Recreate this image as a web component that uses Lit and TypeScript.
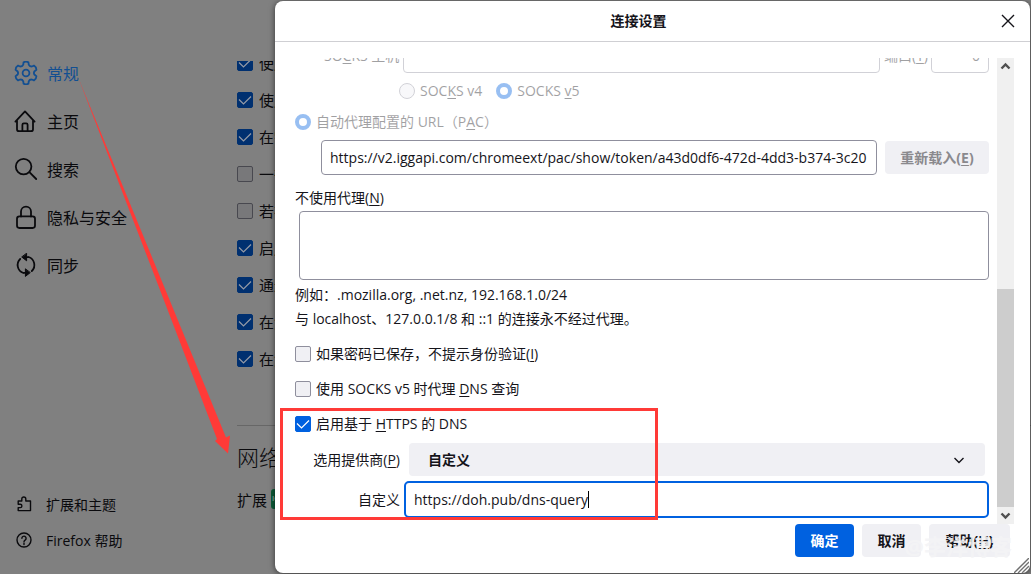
import { LitElement, html, css, svg } from "lit";
import { customElement } from "lit/decorators.js";

const gearTeeth = () => {
  const pts: string[] = [];
  for (let i = 0; i < 6; i++) {
    const at = (deg: number, r: number) => {
      const a = ((i * 60 + deg - 90) * Math.PI) / 180;
      return `${(12 + r * Math.cos(a)).toFixed(2)} ${(12 + r * Math.sin(a)).toFixed(2)}`;
    };
    pts.push(`${i ? "L" : "M"}${at(-13, 10.9)}Q${at(0, 12)} ${at(13, 10.9)}L${at(18, 8.8)}Q${at(30, 7.2)} ${at(42, 8.8)}`);
  }
  return pts.join("") + "Z";
};

const icons = {
  gear: svg`<path d=${gearTeeth()} /><circle cx="12" cy="12" r="3.4" />`,
  home: svg`<path d="M1.4 12.6 11 2.400l9.600 10.200M3 11v9.200a2 2 0 0 0 2 2h12a2 2 0 0 0 2-2V11M8.400 22v-6.200a1.400 1.400 0 0 1 1.400-1.400h2.400a1.400 1.400 0 0 1 1.400 1.400V22" />`,
  search: svg`<circle cx="9.600" cy="9.600" r="7.800" /><path d="m15.400 15.200 6.800 6.800" />`,
  lock: svg`<rect x="3" y="11.400" width="18" height="11.600" rx="2.400" /><path d="M7 11.400V6.600a5 5 0 0 1 10 0v4.800" />`,
  sync: svg`<path d="M9.4 20A8.4 8.4 0 0 1 6.2 6M14.6 4A8.4 8.4 0 0 1 17.8 18M11 4.2h3.6M13 19.8H9.4" /><path d="M12.6.6v7.2L8 4.2zM11.4 16.200v7.200L16 19.800z" fill="currentColor" stroke-width="1" />`,
  puzzle: svg`<path d="M2.200 5h3.600V3a2 2 0 0 1 4 0v2h4.700v9.600H2.200v-3h2a1.600 1.600 0 0 0 0-3.400h-2z" />`,
  help: svg`<circle cx="8" cy="8" r="7" /><path d="M5.900 6.300a2.100 2.100 0 1 1 3.400 1.600C8.400 8.500 8 8.800 8 9.700M8 11.300v1.200" />`,
};

const categories = [
  { icon: icons.gear, label: "常规", current: true },
  { icon: icons.home, label: "主页" },
  { icon: icons.search, label: "搜索" },
  { icon: icons.lock, label: "隐私与安全" },
  { icon: icons.sync, label: "同步" },
];

const options = [
  { label: "使用", on: true },
  { label: "使用", on: true },
  { label: "在需", on: true },
  { label: "一律", on: false },
  { label: "若在", on: false },
  { label: "启用", on: true },
  { label: "通过", on: true },
  { label: "在您", on: true },
  { label: "在您", on: true },
];

const base = css`
  * { box-sizing: border-box; }
  input, button, select, textarea { font: inherit; color: inherit; margin: 0; }
  .check {
    appearance: none;
    flex: none;
    width: 16px;
    height: 16px;
    border: 1px solid #8f8f9d;
    border-radius: 2px;
    background: #f0f0f4;
  }
  .check:checked {
    border-color: #0061e0;
    background: #0061e0 url("data:image/svg+xml,%3Csvg xmlns='http://www.w3.org/2000/svg' width='14' height='14'%3E%3Cpath d='M1 6.500 5.500 11 13 3.500' fill='none' stroke='white' stroke-width='1.200'/%3E%3C/svg%3E") center no-repeat;
  }
`;

@customElement("settings-page")
class SettingsPage extends LitElement {
  static styles = [base, css`
    :host { display: flex; min-height: 100vh; background: #808080; color: #0a0a0d; }
    .sidebar { display: flex; flex-direction: column; justify-content: space-between; width: 237px; padding: 49px 0 16px; }
    .nav { display: flex; flex-direction: column; }
    .nav a { display: flex; align-items: center; color: inherit; text-decoration: none; white-space: nowrap; }
    .primary a { height: 48px; padding-left: 14px; gap: 9px; font-size: 16px; }
    .primary a.current { color: #124f92; }
    .secondary a { height: 36px; padding-left: 16px; gap: 14px; font-size: 14px; }
    svg { fill: none; stroke: currentColor; stroke-width: 1.8; stroke-linejoin: round; stroke-linecap: round; flex: none; }
    .secondary svg { stroke-width: 1.4; }
    .main { flex: 1; min-width: 0; padding-top: 61px; overflow: hidden; font-size: 15px; }
    .list { display: flex; flex-direction: column; justify-content: flex-end; height: 316px; overflow: hidden; }
    .list label { display: flex; flex: none; align-items: center; gap: 6px; height: 37px; }
    .check { border-color: #48484f; background-color: #78787a; }
    .check:checked {
      border-color: #003070;
      background: #003070 url("data:image/svg+xml,%3Csvg xmlns='http://www.w3.org/2000/svg' width='14' height='14'%3E%3Cpath d='M1 6.500 5.500 11 13 3.500' fill='none' stroke='%23949aa6' stroke-width='1.200'/%3E%3C/svg%3E") center no-repeat;
    }
    h2 { margin: 48px 0 0; padding: 14px 0 0; border-top: 1px solid #676767; font-size: 22px; line-height: 34px; font-weight: 300; }
    .row { display: flex; align-items: center; gap: 4px; height: 50px; }
    .badge { width: 20px; height: 20px; border-radius: 3px; background: #0c5c38; color: #b5c7bd; font-size: 8px; line-height: 18px; padding-left: 1px; }
  `];
  render() {
    return html`
      <div class="sidebar">
        <nav class="nav primary">
          ${categories.map((c) => html`<a href="#" class=${c.current ? "current" : ""}><svg width="24" height="24" viewBox="0 0 24 24">${c.icon}</svg>${c.label}</a>`)}
        </nav>
        <nav class="nav secondary">
          <a href="#"><svg width="16" height="16" viewBox="0 0 16 16">${icons.puzzle}</svg>扩展和主题</a>
          <a href="#"><svg width="16" height="16" viewBox="0 0 16 16">${icons.help}</svg>Firefox 帮助</a>
        </nav>
      </div>
      <main class="main">
        <div class="list">
          ${options.map((o) => html`<label><input type="checkbox" class="check" .checked=${o.on} />${o.label}</label>`)}
        </div>
        <h2>网络</h2>
        <div class="row">扩展<span class="badge">IG</span></div>
      </main>
    `;
  }
}

@customElement("connection-dialog")
class ConnectionDialog extends LitElement {
  static styles = [base, css`
    :host { display: flex; flex-direction: column; background: #fff; color: #15141a; border-radius: 8px; box-shadow: 0 1px 6px rgba(0, 0, 0, 0.6); font-size: 14px; line-height: 20px; overflow: hidden; }
    u { text-underline-offset: 2px; }
    header { display: grid; grid-template-columns: 16px 1fr 44px; align-items: center; height: 41px; flex: none; border-bottom: 1px solid #cfcfd3; }
    h1 { grid-column: 2; margin: 0; font-size: 14px; font-weight: 700; text-align: center; }
    .close { display: grid; place-items: center; border: 0; background: none; padding: 0; height: 40px; }
    .close svg { fill: none; stroke: #15141a; stroke-width: 1.4; }
    .body { display: flex; flex: 1; min-height: 0; margin: 16px 16px 0 20px; gap: 8px; }
    .content { display: flex; flex: 1; min-width: 0; flex-direction: column; justify-content: flex-end; overflow: hidden; }
    .content > * { flex: none; }
    .text { height: 35px; min-width: 0; padding: 0 8px; border: 1px solid #8f8f9d; border-radius: 4px; background: #fff; }
    .off { opacity: 0.4; }
    .host { display: flex; align-items: center; gap: 4px; padding-left: 29px; }
    .host .text { flex: 1; }
    .host .port { flex: none; width: 58px; text-align: right; }
    .host label { white-space: nowrap; }
    .host label:first-child { width: 75px; }
    .host .portname { width: 43px; }
    .choices { display: flex; gap: 14px; height: 36px; padding-left: 104px; }
    .line { display: flex; align-items: center; gap: 5px; }
    .pac { height: 26px; }
    .radio { appearance: none; flex: none; width: 16px; height: 16px; border: 1px solid #8f8f9d; border-radius: 50%; background: #f0f0f4; }
    .radio:checked { border: 4px solid #0061e0; background: #fff; }
    .url { display: flex; align-items: center; gap: 8px; margin: 5px 0 13px; padding-left: 26px; }
    .url .text { flex: 1; }
    .btn { height: 33px; border: 0; border-radius: 4px; background: #f0f0f4; font-weight: 700; padding: 0; }
    .reload { width: 104px; color: #8a898d; }
    .bypass { height: 69px; margin: 3px 0 3px 4px; padding: 8px; border: 1px solid #8f8f9d; border-radius: 4px; resize: none; background: #fff; }
    p { margin: 0; line-height: 24px; }
    .options { display: flex; flex-direction: column; margin-top: 5px; }
    .options .line { height: 35px; }
    .doh { display: grid; grid-template-columns: 105px 1fr; align-items: center; text-align: right; column-gap: 9px; row-gap: 5px; margin: 2px 0 6px; }
    .provider { height: 33px; margin-right: 4px; appearance: none; border: 0; border-radius: 4px; padding: 0 19px; font-weight: 700; background: #f0f0f4 url("data:image/svg+xml,%3Csvg xmlns='http://www.w3.org/2000/svg' width='12' height='12'%3E%3Cpath d='M1.500 4 6 8.500 10.500 4' fill='none' stroke='%2315141a' stroke-width='1.400'/%3E%3C/svg%3E") right 20px center no-repeat; }
    .focus { display: flex; align-items: center; height: 37px; border: 2px solid #0061e0; border-radius: 5px; margin-left: -5px; padding-left: 8px; }
    .focus input { border: 0; outline: 0; padding: 0; background: none; field-sizing: content; }
    .caret { width: 1px; height: 17px; background: #000; }
    .scroll { display: flex; flex-direction: column; flex: none; width: 17px; background: #f0f0f0; }
    .scroll svg { fill: none; stroke: #505050; stroke-width: 2.4; flex: none; }
    .thumb { flex: 218; background: #cdcdcd; }
    .track { flex: 214; }
    footer { display: flex; justify-content: flex-end; gap: 8px; padding: 0 20px 16px; flex: none; }
    footer .btn { width: 59px; }
    footer .ok { background: #0061e0; color: #fff; }
    footer .help { width: 81px; }
    .watermark { position: absolute; right: 18px; bottom: 14px; font-size: 22px; line-height: 26px; font-weight: 700; color: rgba(244, 244, 246, 0.9); pointer-events: none; }
    .grip { position: absolute; right: 1px; bottom: 0; stroke: #707070; stroke-width: 1.4; }
  `];
  render() {
    return html`
      <header>
        <h1>连接设置</h1>
        <button class="close" aria-label="关闭"><svg width="14" height="14" viewBox="0 0 14 14"><path d="m1 1 12 12M13 1 1 13" /></svg></button>
      </header>
      <div class="body">
        <div class="content">
          <div class="host off">
            <label for="host">SO<u>C</u>KS 主机</label>
            <input id="host" class="text" disabled />
            <label for="port" class="portname">端口(<u>T</u>)</label>
            <input id="port" class="text port" value="0" disabled />
          </div>
          <div class="choices off">
            <label class="line"><input type="radio" class="radio" name="socks" disabled /><span>SOC<u>K</u>S v4</span></label>
            <label class="line"><input type="radio" class="radio" name="socks" checked disabled /><span>SOCKS <u>v</u>5</span></label>
          </div>
          <label class="line pac off"><input type="radio" class="radio" name="mode" checked disabled /><span>自动代理配置的 URL（P<u>A</u>C）</span></label>
          <div class="url">
            <input class="text" aria-label="URL" value="https://v2.iggapi.com/chromeext/pac/show/token/a43d0df6-472d-4dd3-b374-3c20" />
            <button class="btn reload" disabled>重新载入(<u>E</u>)</button>
          </div>
          <label for="bypass">不使用代理(<u>N</u>)</label>
          <textarea id="bypass" class="bypass"></textarea>
          <p>例如：.mozilla.org, .net.nz, 192.168.1.0/24</p>
          <p>与 localhost、127.0.0.1/8 和 ::1 的连接永不经过代理。</p>
          <div class="options">
            <label class="line"><input type="checkbox" class="check" /><span>如果密码已保存，不提示身份验证(<u>I</u>)</span></label>
            <label class="line"><input type="checkbox" class="check" /><span>使用 SOCKS v5 时代理 <u>D</u>NS 查询</span></label>
            <label class="line"><input type="checkbox" class="check" checked /><span>启用基于 <u>H</u>TTPS 的 DNS</span></label>
          </div>
          <div class="doh">
            <label for="provider">选用提供商(<u>P</u>)</label>
            <select id="provider" class="provider"><option>自定义</option></select>
            <label for="custom">自定义</label>
            <div class="focus"><input id="custom" value="https://doh.pub/dns-query" /><span class="caret"></span></div>
          </div>
        </div>
        <div class="scroll">
          <svg width="17" height="17" viewBox="0 0 17 17"><path d="m4.500 10.500 4-4 4 4" /></svg>
          <div class="track"></div>
          <div class="thumb"></div>
          <svg width="17" height="17" viewBox="0 0 17 17"><path d="m4.500 6.500 4 4 4-4" /></svg>
        </div>
      </div>
      <footer>
        <button class="btn ok">确定</button>
        <button class="btn">取消</button>
        <button class="btn help">帮助(<u>H</u>)</button>
      </footer>
      <span class="watermark">@李洋博客</span>
      <svg class="grip" width="15" height="15" viewBox="0 0 15 15"><path d="M0 15 15 0M4 15 15 4M8 15l7-7M12 15l3-3" /></svg>
    `;
  }
}

@customElement("app-root")
class AppRoot extends LitElement {
  static styles = css`
    :host { display: block; position: relative; min-height: 100vh; overflow: hidden; font-family: "Open Sans", "Noto Sans CJK SC", sans-serif; }
    .dialog { position: absolute; inset: 1px 1px 1px 275px; }
    .arrow { position: absolute; left: 0; top: 0; fill: #ff3a37; pointer-events: none; }
    .frame { position: absolute; left: 280px; top: 408px; width: 378px; height: 112px; box-sizing: border-box; border: 3px solid #ff3a37; pointer-events: none; }
  `;
  render() {
    return html`
      <settings-page></settings-page>
      <connection-dialog class="dialog"></connection-dialog>
      <svg class="arrow" width="240" height="460" viewBox="0 0 240 460"><path d="m78 77 82 213 57 149-2 2 13 12.500 2-18-4 2-60.500-147.500z" /></svg>
      <div class="frame"></div>
    `;
  }
}
